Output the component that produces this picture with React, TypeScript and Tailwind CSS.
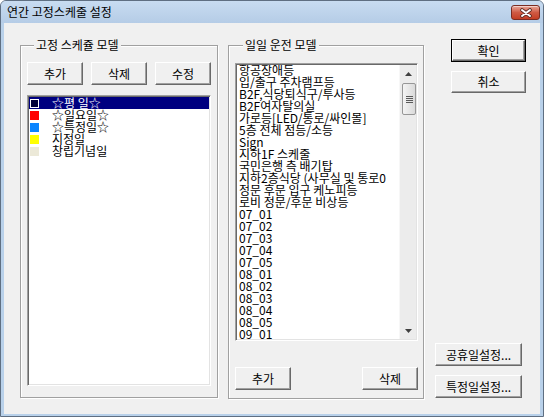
import React from 'react';

function Btn({ children, className = '' }: { children: React.ReactNode; className?: string }) {
  return (
    <div
      className={`flex items-center justify-center bg-[#f0f0f0] text-[12px] leading-none text-black border border-t-white border-l-white border-r-[#696969] border-b-[#696969] shadow-[inset_-1px_-1px_0_#a0a0a0] ${className}`}
    >
      {children}
    </div>
  );
}

const fixedModels: { color: string; label: string }[] = [
  { color: '#ffffff', label: '☆평 일☆' },
  { color: '#ff0000', label: '☆일요일☆' },
  { color: '#0a84ff', label: '☆특정일☆' },
  { color: '#ffff00', label: '지정일' },
  { color: '#ece9d8', label: '창립기념일' },
];

const daily = [
  '항공장애등',
  '입/출구 주차램프등',
  'B2F,식당퇴식구/투사등',
  'B2F여자탈의실',
  '가로등[LED/통로/싸인몰]',
  '5층 전체 점등/소등',
  'Sign',
  '지하1F 스케줄',
  '국민은행 측 배기탑',
  '지하2층식당 (사무실 및 통로0',
  '정문 후문 입구 케노피등',
  '로비 정문/후문 비상등',
  '07_01',
  '07_02',
  '07_03',
  '07_04',
  '07_05',
  '08_01',
  '08_02',
  '08_03',
  '08_04',
  '08_05',
  '09_01',
];

function CloseX() {
  return (
    <svg width="14" height="10" viewBox="0 0 14 10">
      <path d="M3 2 L11 8 M11 2 L3 8" stroke="#5a2a22" strokeWidth="3.6" strokeLinecap="round" />
      <path d="M3 2 L11 8 M11 2 L3 8" stroke="#ffffff" strokeWidth="2" strokeLinecap="round" />
    </svg>
  );
}

function ScrollBar() {
  return (
    <div className="w-[17px] h-full flex flex-col bg-[#ececec] border-l border-l-[#f7f7f7]">
      <div className="h-[17px] flex items-center justify-center">
        <svg width="7" height="4" viewBox="0 0 7 4">
          <polygon points="3.5,0 7,4 0,4" fill="#404040" />
        </svg>
      </div>
      <div className="ml-[2px] mt-[1px] h-[32px] rounded-[2px] border border-[#979797] bg-gradient-to-r from-[#f4f4f4] to-[#dadada] flex flex-col items-center justify-center gap-[1px]">
        <div className="w-[7px] h-[1px] bg-[#5a5a5a]" />
        <div className="w-[7px] h-[1px] bg-[#5a5a5a]" />
        <div className="w-[7px] h-[1px] bg-[#5a5a5a]" />
        <div className="w-[7px] h-[1px] bg-[#5a5a5a]" />
      </div>
      <div className="flex-1" />
      <div className="h-[17px] flex items-center justify-center">
        <svg width="7" height="4" viewBox="0 0 7 4">
          <polygon points="0,0 7,0 3.5,4" fill="#404040" />
        </svg>
      </div>
    </div>
  );
}

const sunken =
  'bg-white border border-t-[#a0a0a0] border-l-[#a0a0a0] border-r-white border-b-white shadow-[inset_1px_1px_0_#696969,inset_-1px_-1px_0_#e3e3e3] p-[1px]';

export default function App() {
  return (
    <div className="w-[544px] h-[417px] flex flex-col bg-[#b9d1ea] border border-[#5f6f82] rounded-t-[6px] font-['Noto_Sans_CJK_KR',sans-serif] text-black overflow-hidden">
      {/* title bar */}
      <div className="h-[22px] flex items-start justify-between bg-gradient-to-b from-[#c8dcf1] to-[#b5cce6] pr-[3px]">
        <div className="h-[22px] flex items-center pl-[6px] text-[12px] leading-none text-black">연간 고정스케줄 설정</div>
        <div className="mt-[4px] w-[29px] h-[15px] rounded-[3px] border border-[#7a2c22] bg-gradient-to-b from-[#e7a699] via-[#cf5a44] to-[#c43d22] flex items-center justify-center shadow-[inset_0_1px_0_rgba(255,255,255,0.5)]">
          <CloseX />
        </div>
      </div>
      {/* client */}
      <div className="mx-[3px] mb-[2px] flex-1 bg-[#f0f0f0] flex pl-[16px]">
        {/* left group */}
        <fieldset className="self-start mt-[15px] w-[198px] border border-[#a0a0a0] shadow-[inset_1px_1px_0_#ffffff,1px_1px_0_#ffffff] px-[6px] pt-[10px] pb-[11px]">
          <legend className="ml-[7px] px-[2px] bg-[#f0f0f0] text-[12px] leading-[14px]">고정 스케쥴 모델</legend>
          <div className="flex gap-[8px]">
            <Btn className="w-[56px] h-[23px]">추가</Btn>
            <Btn className="w-[56px] h-[23px]">삭제</Btn>
            <Btn className="w-[56px] h-[23px]">수정</Btn>
          </div>
          <div className={`mt-[10px] w-[184px] h-[291px] ${sunken}`}>
            {fixedModels.map((m, i) => (
              <div
                key={m.label}
                className={`h-[12px] flex items-center text-[12px] leading-[12px] whitespace-nowrap ${i === 0 ? 'bg-[#000080] text-white' : 'text-black'}`}
              >
                <div
                  className={`ml-[1px] w-[9px] h-[9px] shrink-0 ${i === 0 ? 'border border-white' : ''}`}
                  style={{ backgroundColor: i === 0 ? '#00003a' : m.color }}
                />
                <span className="ml-[13px]">{m.label}</span>
              </div>
            ))}
          </div>
        </fieldset>
        {/* middle group */}
        <fieldset className="self-start mt-[15px] ml-[10px] w-[196px] border border-[#a0a0a0] shadow-[inset_1px_1px_0_#ffffff,1px_1px_0_#ffffff] pl-[6px] pr-[5px] pt-[11px] pb-[8px]">
          <legend className="ml-[8px] px-[2px] bg-[#f0f0f0] text-[12px] leading-[14px]">일일 운전 모델</legend>
          <div className={`w-[183px] h-[278px] flex ${sunken}`}>
            <div className="flex-1 overflow-hidden pl-[2px]">
              <div className="-mt-[1px]">
                {daily.map((d) => (
                  <div key={d} className="h-[12px] text-[12px] leading-[12px] whitespace-nowrap">
                    {d}
                  </div>
                ))}
              </div>
            </div>
            <ScrollBar />
          </div>
          <div className="mt-[26px] flex justify-between">
            <Btn className="w-[56px] h-[23px]">추가</Btn>
            <Btn className="w-[56px] h-[23px]">삭제</Btn>
          </div>
        </fieldset>
        {/* right column */}
        <div className="flex-1 flex flex-col pb-[16px]">
          <div className="mt-[16px] ml-[27px] w-[75px] h-[23px] border border-black">
            <Btn className="w-full h-full">확인</Btn>
          </div>
          <Btn className="mt-[9px] ml-[27px] w-[75px] h-[22px]">취소</Btn>
          <div className="mt-auto ml-[11px] flex flex-col gap-[9px]">
            <Btn className="w-[87px] h-[23px]">공휴일설정...</Btn>
            <Btn className="w-[87px] h-[23px]">특정일설정...</Btn>
          </div>
        </div>
      </div>
    </div>
  );
}
